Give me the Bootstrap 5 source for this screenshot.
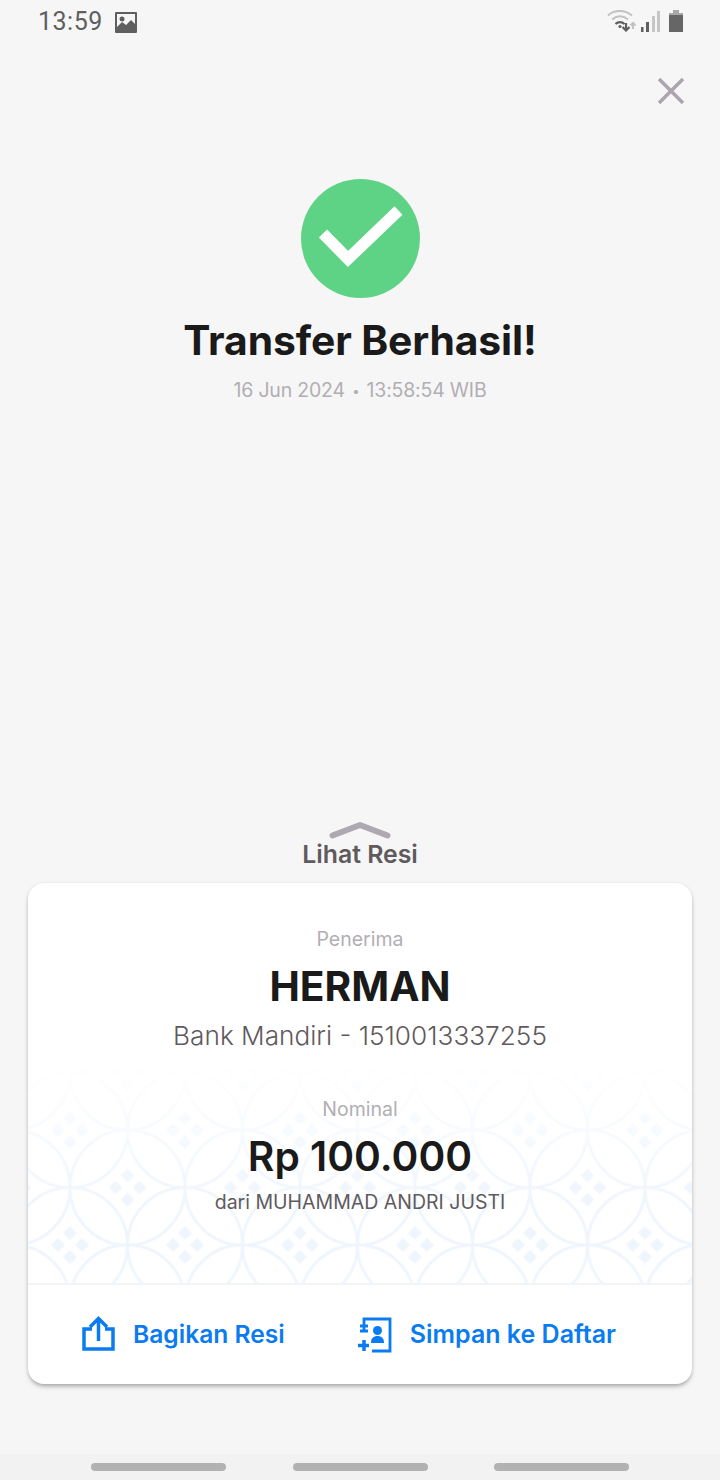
<!DOCTYPE html>
<html lang="id">
  <head>
    <meta charset="UTF-8" />
    <title>Transfer Berhasil</title>
    <meta name="viewport" content="width=device-width, initial-scale=1" />
    <link href="https://cdn.jsdelivr.net/npm/bootstrap@5.3.0/dist/css/bootstrap.min.css" rel="stylesheet" />
    <style>
      html, body { height: 100%; }
      body { background: #f6f6f6; font-family: Inter, "Noto Sans", sans-serif; color: #1a1a1a; }
      .screen { width: 720px; height: 1480px; }
      .status-bar { height: 44px; padding: 6px 37px 0 38px; color: #5f5f5f; }
      .status-time { font-family: Roboto, sans-serif; font-size: 25px; line-height: 32px; letter-spacing: .5px; }
      .status-icons { padding-top: 4px; }
      .status-wifi { margin-right: 4px; }
      .status-signal { margin-right: 9px; }
      .close-row { height: 62px; padding-right: 34px; }
      .check-circle { width: 120px; height: 120px; margin-top: 73px; margin-left: 1px; }
      .title-text { font-size: 40.8px; font-weight: 700; line-height: 46px; margin: 18px 0 0; letter-spacing: -.1px; }
      .date-text { font-size: 19.5px; line-height: 28px; margin-top: 13px; color: #b2aeb4; letter-spacing: -.2px; }
      .date-dot { font-size: 13px; vertical-align: 1px; margin: 0 2px; }
      .see-receipt { color: #5f5a5e; font-size: 24.8px; font-weight: 600; line-height: 30px; }
      .receipt-card { margin: 14px 28px 0; height: 501px; border: 0; border-radius: 16px; background: #fff; box-shadow: 0 3px 5px -1px rgba(0, 0, 0, .35), 0 0 3px rgba(0, 0, 0, .06); overflow: hidden; }
      .receipt-top { height: 402px; padding-top: 42px; border-bottom: 2px solid #f3f4f5; }
      .batik-bg { left: 0; top: 177px; -webkit-mask-image: linear-gradient(to bottom, transparent, #000 65%); mask-image: linear-gradient(to bottom, transparent, #000 65%); }
      .receipt-body { z-index: 1; }
      .label-text { color: #b2aeb4; font-size: 19.5px; line-height: 28px; }
      .name-text { font-size: 40.7px; font-weight: 700; line-height: 48px; margin-top: 10px; }
      .bank-text { color: #5f5a5e; font-size: 26.2px; line-height: 34px; margin-top: 8px; font-weight: 300; }
      .nominal-label { margin-top: 42px; }
      .amount-text { font-size: 40.7px; font-weight: 600; line-height: 46px; margin-top: 11px; }
      .from-text { color: #5f5a5e; font-size: 19.5px; line-height: 28px; margin-top: 8px; }
      .action-link { color: #0a7bf0; font-weight: 600; text-decoration: none; gap: 18px; }
      .action-share { font-size: 24.6px; }
      .action-save { font-size: 25px; }
      .receipt-actions { height: 99px; padding: 0 76px 0 54px; }
      .soft-nav { height: 26px; background: #f2f2f2; padding: 9px 91px 0; margin-top: 70px; }
      .nav-pill-bar { width: 135px; height: 8px; border-radius: 4px; background: #b2b2b2; }
    </style>
  </head>
  <body class="m-0">
    <div class="screen d-flex flex-column mx-auto">
      <div class="status-bar d-flex justify-content-between align-items-start">
        <div class="d-flex align-items-center gap-2">
          <span class="status-time me-1">13:59</span>
          <svg width="22" height="21" viewBox="0 0 22 21">
            <path fill="#5f5f5f" fill-rule="evenodd" d="M1 0h20a1 1 0 0 1 1 1v19a1 1 0 0 1-1 1H1a1 1 0 0 1-1-1V1a1 1 0 0 1 1-1zm1 2v13l5-5 4 3 5-5 4 4V2zM7 4.500a2.500 2.500 0 1 1 0 5 2.500 2.500 0 0 1 0-5z" />
          </svg>
        </div>
        <div class="status-icons d-flex align-items-end">
          <svg class="status-wifi" width="30" height="22" viewBox="0 0 30 22">
            <g fill="none" stroke="#c2c2c2" stroke-width="2">
              <path d="M1 5.500C7-.5 18-.5 25 5.500" />
              <path d="M5 9.500c5-4 11-4 16 0" />
              <path d="M26 19v-6M23.500 15.500L26 13l2.500 2.500" />
            </g>
            <g fill="none" stroke="#5f5f5f" stroke-width="2.200">
              <path d="M8.500 14c2.500-2.500 6.500-2.500 9 0" />
              <path d="M19 13v7M15.500 17L19 20.500l3.500-3.500" />
            </g>
            <circle cx="13" cy="16.500" r="1.600" fill="#5f5f5f" />
          </svg>
          <svg class="status-signal" width="19" height="21" viewBox="0 0 19 21">
            <rect x="0" y="16" width="2.500" height="5" fill="#5f5f5f" />
            <rect x="5" y="11" width="3" height="10" fill="#5f5f5f" />
            <rect x="11" y="5" width="3" height="16" fill="#c6c6c6" />
            <rect x="16" y="0" width="3" height="21" fill="#c6c6c6" />
          </svg>
          <svg width="14" height="22" viewBox="0 0 14 22">
            <path d="M4 0h6v3H4z" fill="#a8a8a8" />
            <path d="M0 3h14v2H0z" fill="#a8a8a8" />
            <path d="M0 5h14v17H0z" fill="#666" />
          </svg>
        </div>
      </div>

      <div class="close-row d-flex justify-content-end align-items-end">
        <svg width="30" height="30" viewBox="0 0 30 30">
          <path d="M3 3l24 24M27 3L3 27" stroke="#aba6ad" stroke-width="3.500" fill="none" />
        </svg>
      </div>

      <div class="text-center">
        <svg class="check-circle" viewBox="0 0 120 120">
          <circle cx="59.500" cy="59.500" r="59.500" fill="#5ed385" />
          <path d="M22 54.500l25 25.500 50.500-48.500" fill="none" stroke="#fff" stroke-width="11.500" />
        </svg>
        <h1 class="title-text">Transfer Berhasil!</h1>
        <div class="date-text">16 Jun 2024 <span class="date-dot">•</span> 13:58:54 WIB</div>
      </div>

      <div class="mt-auto text-center">
        <svg class="d-block mx-auto" width="62" height="20" viewBox="0 0 62 20">
          <path d="M3.500 16.500L31 6l27.500 10.500" fill="none" stroke="#aea8b2" stroke-width="6" stroke-linecap="round" stroke-linejoin="round" />
        </svg>
        <div class="see-receipt">Lihat Resi</div>
      </div>

      <div class="card receipt-card">
        <div class="receipt-top position-relative text-center">
          <svg class="batik-bg position-absolute" width="664" height="225">
            <defs>
              <g id="diamonds" fill="#eef5fc">
                <path d="M0-19l7 7-7 7-7-7zM0 5l7 7-7 7-7-7zM-12-7l7 7-7 7-7-7zM12-7l7 7-7 7-7-7z" />
              </g>
              <pattern id="batik" x="-15.500" y="12.500" width="115" height="115" patternUnits="userSpaceOnUse">
                <g fill="none" stroke="#eef5fc" stroke-width="2.800">
                  <circle cx="57.500" cy="57.500" r="57.500" />
                  <circle cx="0" cy="0" r="57.500" />
                  <circle cx="115" cy="0" r="57.500" />
                  <circle cx="0" cy="115" r="57.500" />
                  <circle cx="115" cy="115" r="57.500" />
                </g>
                <use href="#diamonds" x="57.500" y="57.500" />
                <use href="#diamonds" x="0" y="0" />
                <use href="#diamonds" x="115" y="0" />
                <use href="#diamonds" x="0" y="115" />
                <use href="#diamonds" x="115" y="115" />
              </pattern>
            </defs>
            <rect width="664" height="225" fill="url(#batik)" />
          </svg>
          <div class="receipt-body position-relative">
            <div class="label-text">Penerima</div>
            <div class="name-text">HERMAN</div>
            <div class="bank-text">Bank Mandiri - 1510013337255</div>
            <div class="label-text nominal-label">Nominal</div>
            <div class="amount-text">Rp 100.000</div>
            <div class="from-text">dari MUHAMMAD ANDRI JUSTI</div>
          </div>
        </div>
        <div class="receipt-actions d-flex justify-content-between align-items-center">
          <a class="action-link action-share d-flex align-items-center" href="#">
            <svg width="33" height="36" viewBox="0 0 33 36">
              <path d="M10 13H2v20h29V13h-8M16.500 25V3M8 11l8.500-8.500L25 11" fill="none" stroke="#0a7bf0" stroke-width="3.500" />
            </svg>
            Bagikan Resi
          </a>
          <a class="action-link action-save d-flex align-items-center" href="#">
            <svg width="34" height="36" viewBox="0 0 34 36">
              <path d="M6 9V2h26v32H14M2 9h8M6 9v5M2 14h8" fill="none" stroke="#0a7bf0" stroke-width="2.800" />
              <path d="M6 23v11M0 28.500h11" fill="none" stroke="#0a7bf0" stroke-width="3.500" />
              <circle cx="19.500" cy="13.500" r="4.500" fill="#0a7bf0" />
              <path d="M13 26c0-5 2.500-7 6.500-7s6.500 2 6.500 7z" fill="#0a7bf0" />
            </svg>
            Simpan ke Daftar
          </a>
        </div>
      </div>

      <div class="soft-nav d-flex justify-content-between">
        <div class="nav-pill-bar"></div>
        <div class="nav-pill-bar"></div>
        <div class="nav-pill-bar"></div>
      </div>
    </div>
    <script src="https://cdn.jsdelivr.net/npm/bootstrap@5.3.0/dist/js/bootstrap.bundle.min.js"></script>
  </body>
</html>
